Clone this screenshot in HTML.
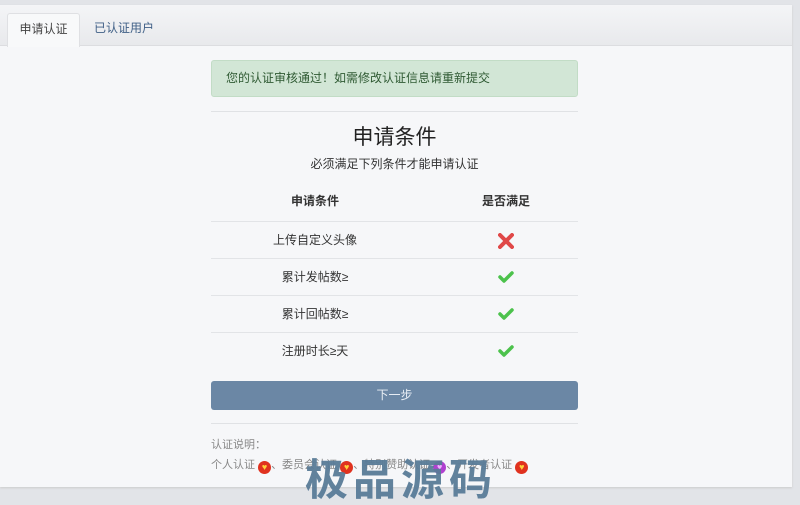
<!DOCTYPE html>
<html><head><meta charset="utf-8"><style>
body{margin:0;width:800px;height:505px;background:#e2e4e8;font-family:"Liberation Sans","Noto Sans CJK SC",sans-serif;position:relative;overflow:hidden;font-size:12px;color:#333}
.panel{position:absolute;left:0;top:5px;width:792px;height:482px;background:#f6f7f9;box-shadow:0 1px 2px #ccc}
.tabs{position:absolute;left:0;top:0;width:792px;height:40px;background:linear-gradient(#f4f5f7,#e8e9ec);border-bottom:1px solid #dcdde0}
.tab{position:absolute;top:8px;height:32px;line-height:30px;font-size:12px}
.t1{left:7px;width:71px;text-align:center;background:#f8f9fa;border:1px solid #dfe0e3;border-bottom:none;border-radius:3px 3px 0 0;color:#444;height:33px}
.t2{left:94px;color:#3f5f86}
.col{position:absolute;left:211px;width:367px}
.alert{top:55px;height:37px;background:#d2e6d6;border:1px solid #c2dcc6;border-radius:3px;box-sizing:border-box;line-height:35px;padding-left:14px;color:#2f5a33}
.hr{height:1px;background:#e0e2e5}
.row{position:absolute;left:211px;width:367px;height:37px;border-top:1px solid #e2e4e7;line-height:36px}
.row span{position:absolute;text-align:center}
.row svg{position:absolute;left:287px;top:11px}
.a{left:0;width:208px}.b{left:220px;width:150px}
.btn{top:376px;height:29px;background:#6b87a5;border-radius:3px;color:#e8eef5;text-align:center;line-height:29px}
.h{display:inline-block;width:13px;height:13px;border-radius:50%;background:#e0321f;vertical-align:-2px;color:#ffd23a;font-size:9px;text-align:center;line-height:13px;font-weight:bold}
.wm{position:absolute;left:305px;top:457px;font-size:43px;font-weight:bold;color:#5a7c98;letter-spacing:5px;line-height:48px;opacity:.95}
</style></head><body>
<div class="panel">
<div class="tabs"><div class="tab t1">申请认证</div><div class="tab t2">已认证用户</div></div>
<div class="col alert">您的认证审核通过！如需修改认证信息请重新提交</div>
<div class="col hr" style="top:106px"></div>
<div class="col" style="top:116px;text-align:center;font-size:21px;color:#222">申请条件</div>
<div class="col" style="top:150px;text-align:center;font-size:12px;color:#333">必须满足下列条件才能申请认证</div>
<div class="row" style="top:178px;border-top:none;font-weight:bold"><span class="a">申请条件</span><span class="b">是否满足</span></div>
<div class="row" style="top:216px"><span class="a">上传自定义头像</span><svg width="16" height="16" viewBox="0 0 16 16"><path d="M2 2L14 14M14 2L2 14" stroke="#e04848" stroke-width="4" stroke-linecap="round"/></svg></div>
<div class="row" style="top:253px"><span class="a">累计发帖数≥</span><svg width="16" height="14" viewBox="0 0 16 14"><path d="M2 7L6 11L14 3" fill="none" stroke="#4cc24c" stroke-width="3.5" stroke-linecap="round" stroke-linejoin="round"/></svg></div>
<div class="row" style="top:290px"><span class="a">累计回帖数≥</span><svg width="16" height="14" viewBox="0 0 16 14"><path d="M2 7L6 11L14 3" fill="none" stroke="#4cc24c" stroke-width="3.5" stroke-linecap="round" stroke-linejoin="round"/></svg></div>
<div class="row" style="top:327px"><span class="a">注册时长≥天</span><svg width="16" height="14" viewBox="0 0 16 14"><path d="M2 7L6 11L14 3" fill="none" stroke="#4cc24c" stroke-width="3.5" stroke-linecap="round" stroke-linejoin="round"/></svg></div>
<div class="col btn">下一步</div>
<div class="col hr" style="top:418px"></div>
<div class="col" style="top:431px;color:#888;font-size:11px">认证说明：</div>
<div class="col" style="top:451px;color:#888;font-size:11px">个人认证 <span class="h">♥</span>、委员会认证 <span class="h">♥</span>、特别赞助认证 <span class="h" style="background:#b040d0;color:#f0b0ff">♥</span>、开发者认证 <span class="h">♥</span></div>
</div>
<div class="wm">极品源码</div>
</body></html>
